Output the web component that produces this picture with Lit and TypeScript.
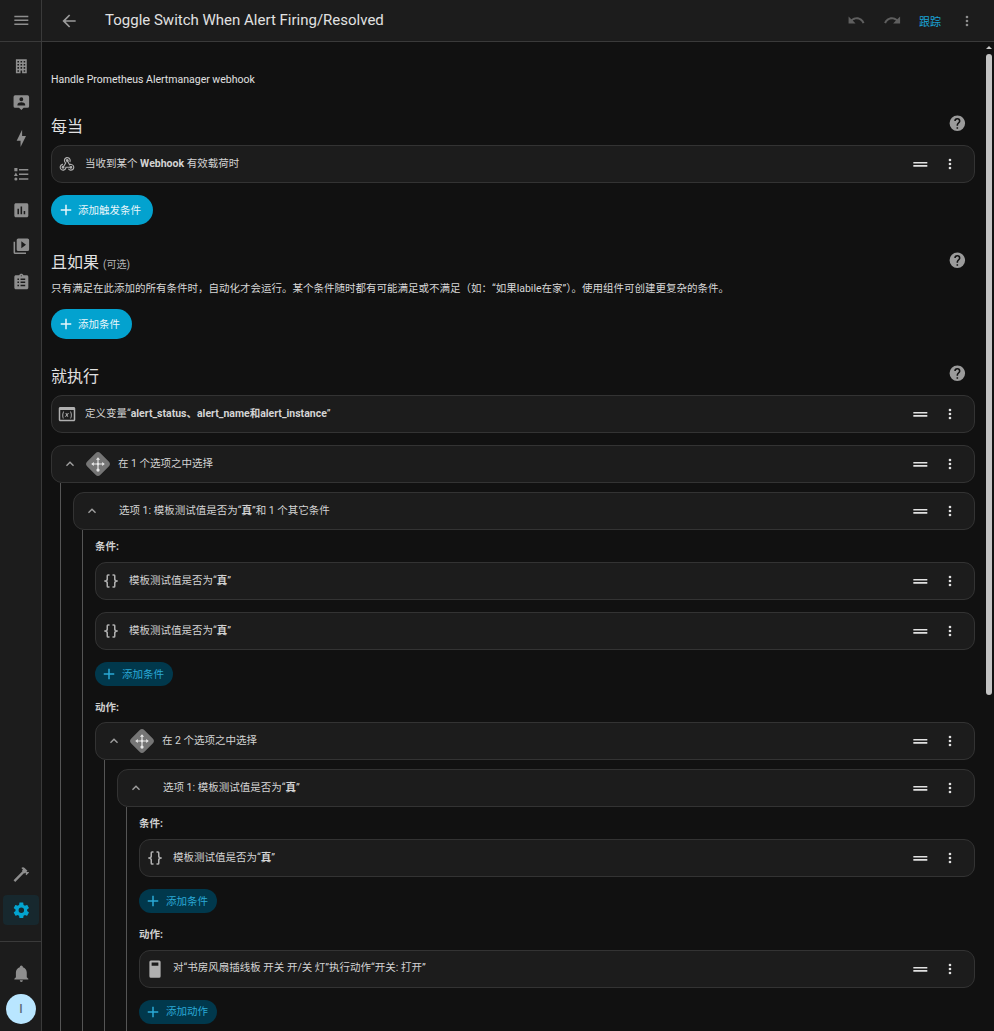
import { LitElement, html, css, svg } from "lit";
import { customElement } from "lit/decorators.js";

const P: Record<string, string> = {
  menu: "M3,6H21V8H3V6M3,11H21V13H3V11M3,16H21V18H3V16Z",
  back: "M20,11V13H8L13.5,18.5L12.08,19.92L4.16,12L12.08,4.08L13.5,5.5L8,11H20Z",
  office: "M5,3V21H11V17.5H13V21H19V3H5M7,5H9V7H7V5M11,5H13V7H11V5M15,5H17V7H15V5M7,9H9V11H7V9M11,9H13V11H11V9M15,9H17V11H15V9M7,13H9V15H7V13M11,13H13V15H11V13M15,13H17V15H15V13M7,17H9V19H7V17M15,17H17V19H15V17Z",
  comment: "M4 3H20A2 2 0 0 1 22 5V17A2 2 0 0 1 20 19H15L12 22L9 19H4A2 2 0 0 1 2 17V5A2 2 0 0 1 4 3ZM12 5.5A2.5 2.5 0 0 0 12 10.5A2.5 2.5 0 0 0 12 5.5ZM7 16H17V15C17 13 14 12 12 12S7 13 7 15Z",
  flash: "M11 15H6L13 1V9H18L11 23V15Z",
  list: "M5,9.5L7.5,14H2.5L5,9.5M3,4H7V8H3V4M5,20A2,2 0 0,0 7,18A2,2 0 0,0 5,16A2,2 0 0,0 3,18A2,2 0 0,0 5,20M9,5V7H21V5H9M9,19H21V17H9V19M9,13H21V11H9V13Z",
  chart: "M19 3H5C3.9 3 3 3.9 3 5V19C3 20.1 3.9 21 5 21H19C20.1 21 21 20.1 21 19V5C21 3.9 20.1 3 19 3M9 17H7V10H9V17M13 17H11V7H13V17M17 17H15V13H17V17Z",
  play: "M4,6H2V20A2,2 0 0,0 4,22H18V20H4V6M20,2H8A2,2 0 0,0 6,4V16A2,2 0 0,0 8,18H20A2,2 0 0,0 22,16V4A2,2 0 0,0 20,2M12,14.5V5.5L18,10L12,14.5Z",
  clip: "M19 3H14.82C14.4 1.84 13.3 1 12 1S9.6 1.84 9.18 3H5C3.9 3 3 3.9 3 5V19C3 20.1 3.9 21 5 21H19C20.1 21 21 20.1 21 19V5C21 3.9 20.1 3 19 3M7 7H9V9H7V7M7 11H9V13H7V11M7 15H9V17H7V15M17 17H11V15H17V17M17 13H11V11H17V13M17 9H11V7H17V9M12 2.75C12.41 2.75 12.75 3.09 12.75 3.5S12.41 4.25 12 4.25 11.25 3.91 11.25 3.5 11.59 2.75 12 2.75Z",
  hammer: "M2 19.63L13.43 8.2L12.72 7.5L14.14 6.07L12 3.89C13.2 2.7 15.09 2.7 16.27 3.89L19.87 7.5L18.45 8.91H21.29L22 9.62L18.45 13.21L17.74 12.5V9.62L16.27 11.04L15.56 10.33L4.13 21.76L2 19.63Z",
  cog: "M12,15.5A3.5,3.5 0 0,1 8.5,12A3.5,3.5 0 0,1 12,8.5A3.5,3.5 0 0,1 15.5,12A3.5,3.5 0 0,1 12,15.5M19.43,12.97C19.47,12.65 19.5,12.33 19.5,12C19.5,11.67 19.47,11.34 19.43,11L21.54,9.37C21.73,9.22 21.78,8.95 21.66,8.73L19.66,5.27C19.54,5.05 19.27,4.96 19.05,5.05L16.56,6.05C16.04,5.66 15.5,5.32 14.87,5.07L14.5,2.42C14.46,2.18 14.25,2 14,2H10C9.75,2 9.54,2.18 9.5,2.42L9.13,5.07C8.5,5.32 7.96,5.66 7.44,6.05L4.95,5.05C4.73,4.96 4.46,5.05 4.34,5.27L2.34,8.73C2.21,8.95 2.27,9.22 2.46,9.37L4.57,11C4.53,11.34 4.5,11.67 4.5,12C4.5,12.33 4.53,12.65 4.57,12.97L2.46,14.63C2.27,14.78 2.21,15.05 2.34,15.27L4.34,18.73C4.46,18.95 4.73,19.03 4.95,18.95L7.44,17.94C7.96,18.34 8.5,18.68 9.13,18.93L9.5,21.58C9.54,21.82 9.75,22 10,22H14C14.25,22 14.46,21.82 14.5,21.58L14.87,18.93C15.5,18.67 16.04,18.34 16.56,17.94L19.05,18.95C19.27,19.03 19.54,18.95 19.66,18.73L21.66,15.27C21.78,15.05 21.73,14.78 21.54,14.63L19.43,12.97Z",
  bell: "M21,19V20H3V19L5,17V11C5,7.9 7.03,5.17 10,4.29C10,4.19 10,4.1 10,4A2,2 0 0,1 12,2A2,2 0 0,1 14,4C14,4.1 14,4.19 14,4.29C16.97,5.17 19,7.9 19,11V17L21,19M14,21A2,2 0 0,1 12,23A2,2 0 0,1 10,21",
  undo: "M12.5,8C9.85,8 7.45,9 5.6,10.6L2,7V16H11L7.38,12.38C8.77,11.22 10.54,10.5 12.5,10.5C16.04,10.5 19.05,12.81 20.1,16L22.47,15.22C21.08,11.03 17.15,8 12.5,8Z",
  redo: "M18.4,10.6C16.55,9 14.15,8 11.5,8C6.85,8 2.92,11.03 1.54,15.22L3.9,16C4.95,12.81 7.95,10.5 11.5,10.5C13.45,10.5 15.23,11.22 16.62,12.38L13,16H22V7L18.4,10.6Z",
  dots: "M12,16A2,2 0 0,1 14,18A2,2 0 0,1 12,20A2,2 0 0,1 10,18A2,2 0 0,1 12,16M12,10A2,2 0 0,1 14,12A2,2 0 0,1 12,14A2,2 0 0,1 10,12A2,2 0 0,1 12,10M12,4A2,2 0 0,1 14,6A2,2 0 0,1 12,8A2,2 0 0,1 10,6A2,2 0 0,1 12,4Z",
  drag: "M21 11H3V9H21V11M21 13H3V15H21V13Z",
  help: "M15.07,11.25L14.17,12.17C13.45,12.89 13,13.5 13,15H11V14.5C11,13.39 11.45,12.39 12.17,11.67L13.41,10.41C13.78,10.05 14,9.55 14,9C14,7.89 13.1,7 12,7A2,2 0 0,0 10,9H8A4,4 0 0,1 12,5A4,4 0 0,1 16,9C16,9.88 15.64,10.67 15.07,11.25M13,19H11V17H13M12,2A10,10 0 0,0 2,12A10,10 0 0,0 12,22A10,10 0 0,0 22,12C22,6.47 17.5,2 12,2Z",
  chevron: "M7.41,15.41L12,10.83L16.59,15.41L18,14L12,8L6,14L7.41,15.41Z",
  plus: "M19,13H13V19H11V13H5V11H11V5H13V11H19V13Z",
  braces: "M8,3A2,2 0 0,0 6,5V9A2,2 0 0,1 4,11H3V13H4A2,2 0 0,1 6,15V19A2,2 0 0,0 8,21H10V19H8V14A2,2 0 0,0 6,12A2,2 0 0,0 8,10V5H10V3M16,3A2,2 0 0,1 18,5V9A2,2 0 0,0 20,11H21V13H20A2,2 0 0,0 18,15V19A2,2 0 0,1 16,21H14V19H16V14A2,2 0 0,1 18,12A2,2 0 0,1 16,10V5H14V3H16Z",
  webhook: "M10.46,19C9,21.07 6.15,21.59 4.09,20.15C2.04,18.71 1.56,15.84 3,13.75C3.87,12.5 5.21,11.83 6.58,11.77L6.63,13.2C5.72,13.27 4.84,13.74 4.27,14.56C3.27,16 3.58,17.94 4.95,18.91C6.33,19.87 8.26,19.5 9.26,18.07C9.57,17.62 9.75,17.13 9.82,16.63V15.62L15.4,15.58L15.47,15.47C16,14.55 17.15,14.23 18.05,14.75C18.95,15.27 19.26,16.43 18.73,17.33C18.2,18.24 17.04,18.56 16.14,18.04C15.73,17.8 15.44,17.42 15.31,17H11.24C11.13,17.73 10.87,18.43 10.46,19M17.74,11.86C20.27,12.17 22.07,14.44 21.76,16.93C21.45,19.43 19.15,21.2 16.62,20.89C15.13,20.71 13.9,19.86 13.19,18.68L14.43,17.96C14.92,18.73 15.75,19.28 16.75,19.41C18.5,19.62 20.05,18.43 20.26,16.76C20.47,15.09 19.23,13.56 17.5,13.35C16.96,13.29 16.44,13.36 15.97,13.53L15.12,13.97L12.54,9.2H12.32C11.26,9.16 10.44,8.29 10.47,7.25C10.5,6.21 11.4,5.4 12.45,5.44C13.5,5.5 14.33,6.35 14.3,7.39C14.28,7.83 14.11,8.23 13.84,8.54L15.74,12.05C16.36,11.85 17.04,11.78 17.74,11.86M8.25,9.14C7.25,6.79 8.31,4.1 10.62,3.12C12.94,2.14 15.62,3.25 16.62,5.6C17.21,6.97 17.09,8.47 16.42,9.67L15.18,8.95C15.6,8.14 15.67,7.15 15.27,6.22C14.59,4.62 12.78,3.85 11.23,4.5C9.67,5.16 8.97,7 9.65,8.6C9.93,9.26 10.4,9.77 10.97,10.11L11.36,10.32L8.29,15.31C8.32,15.36 8.36,15.42 8.39,15.5C8.88,16.41 8.54,17.56 7.62,18.05C6.71,18.54 5.56,18.18 5.06,17.24C4.57,16.31 4.91,15.16 5.83,14.67C6.22,14.46 6.65,14.41 7.06,14.5L9.37,10.73C8.9,10.3 8.5,9.76 8.25,9.14Z",
  variable: "M21 2.5H3C1.9 2.5 1 3.4 1 4.5V19.5C1 20.6 1.9 21.5 3 21.5H21C22.1 21.5 23 20.6 23 19.5V4.5C23 3.4 22.1 2.5 21 2.5M21 19.5H3V6.5H21V19.5M8.2 8.5C6.8 10.5 6.6 15 7.6 18H6.5C5.2 15 5.5 10.5 7 8.5H8.2M16 8.5H17.2C18.7 10.5 19 15 17.4 18H16.3C17.6 15 17.4 10.5 16 8.5M9.8 10.6H11.1L12 12.2L13.2 10.6H14.6L12.6 13.2L13.8 15.8H12.5L11.7 14.2L10.4 15.8H9L11.1 13.2L9.8 10.6Z",
  sw: "M6.5 0.5H17.5A2 2 0 0 1 19.5 2.5V21.5A2 2 0 0 1 17.5 23.5H6.5A2 2 0 0 1 4.5 21.5V2.5A2 2 0 0 1 6.5 0.5M7.5 3.2V7.6H16.5V3.2H7.5Z",
};

const icon = (n: string, cls = "") =>
  html`<svg class="ic ${cls}" viewBox="0 0 24 24">${svg`<path d=${P[n]}></path>`}</svg>`;

const arrows = svg`<g fill="#e8e8e8">
  <circle cx="12" cy="12" r="1.2"></circle>
  <path d="M12 6.2L10.2 8.4H11.5V11H12.5V8.4H13.8Z"></path>
  <path d="M6.2 12L8.4 10.2V11.5H11V12.5H8.4V13.8Z"></path>
  <path d="M17.8 12L15.6 10.2V11.5H13V12.5H15.6V13.8Z"></path>
  <circle cx="12" cy="17.2" r="1.4"></circle>
  <path d="M11.5 12H12.5V17H11.5Z"></path></g>`;

const chooseIcon = html`<svg class="choose" viewBox="0 0 24 24">
  <rect x="4" y="4" width="16" height="16" rx="3" fill="#757575" transform="rotate(45 12 12)"></rect>${arrows}</svg>`;

type Row = { text: unknown; lead?: string; choose?: boolean; chevron?: boolean; spacer?: boolean };

const row = (r: Row) => html`<div class="card ${r.lead ? "has-lead" : ""}">
  ${r.chevron ? html`<span class="chev">${icon("chevron")}</span>` : ""}
  ${r.choose ? chooseIcon : ""}
  ${r.lead ? html`<span class="lead">${icon(r.lead)}</span>` : ""}
  ${r.spacer ? html`<span class="gap"></span>` : ""}
  <span class="label">${r.text}</span>
  <span class="drag">${icon("drag")}</span>
  <span class="more">${icon("dots")}</span>
</div>`;

const cta = (t: string) => html`<button class="cta">${icon("plus")}<span>${t}</span></button>`;
const soft = (t: string) => html`<button class="soft">${icon("plus")}<span>${t}</span></button>`;
const head = (t: unknown) => html`<div class="head"><h2>${t}</h2><span class="help">${icon("help")}</span></div>`;
const tpl = () => row({ lead: "braces", text: html`模板测试值是否为“<b>真</b>”` });

@customElement("app-root")
export class AppRoot extends LitElement {
  static styles = css`
    :host { display: block; width: 994px; height: 1031px; overflow: hidden; background: #111111; color: #e1e1e1;
      font-family: Roboto, "Noto Sans CJK SC", sans-serif; font-size: 10.5px; }
    .app { display: flex; height: 1031px; }
    .ic { display: block; width: 100%; height: 100%; fill: currentColor; }
    .side { width: 41px; box-sizing: content-box; flex: none; background: #1c1c1c; border-right: 1px solid #3a3a3a; display: flex; flex-direction: column; color: #8e8e8e; }
    .side-top { height: 41px; flex: none; display: flex; align-items: center; justify-content: center; padding-left: 1px; border-bottom: 1px solid #3a3a3a; }
    .side-top span { width: 18.67px; height: 18.67px; }
    .nav { display: flex; flex-direction: column; align-items: center; gap: 17.33px; padding: 15px 0 0 1px; flex: 1; }
    .nav span { width: 18.67px; height: 18.67px; display: block; }
    .tools { display: flex; flex-direction: column; align-items: center; gap: 9px; padding: 0 0 16px 1px; }
    .tools .h { width: 18.67px; height: 18.67px; margin-bottom: 2px; }
    .active { width: 36px; height: 30px; border-radius: 4px; background: #17282e; color: #03a4d0; display: flex; align-items: center; justify-content: center; }
    .active span { width: 18.67px; height: 18.67px; }
    .bottom { border-top: 1px solid #3a3a3a; height: 90px; flex: none; display: flex; flex-direction: column; align-items: center; padding: 22px 0 0 1px; box-sizing: border-box; }
    .bottom .b { width: 18.67px; height: 18.67px; }
    .avatar { margin-top: 11px; width: 30px; height: 30px; border-radius: 50%; background: #b9e6ff; color: #5a6b75; font-size: 12px; font-weight: 500; display: flex; align-items: center; justify-content: center; }
    .main { flex: 1; min-width: 0; display: flex; flex-direction: column; position: relative; }
    .top { height: 41px; flex: none; background: #1c1c1c; border-bottom: 1px solid #3a3a3a; display: flex; align-items: center; padding: 0 19px 0 17px; }
    .top .back { width: 20px; height: 20px; color: #9b9b9b; margin-right: 26px; }
    .top h1 { font-size: 15px; font-weight: 400; margin: 0 0 2px; flex: 1; color: #e1e1e1; }
    .top .act { width: 18.67px; height: 18.67px; color: #5f5f5f; margin-right: 17.33px; }
    .follow { color: #1aa3d6; font-size: 11px; margin-right: 18px; }
    .top .d { width: 16px; height: 16px; color: #8e8e8e; }
    .body { flex: 1; min-height: 0; overflow: hidden; padding: 31px 19px 0 9px; }
    .desc { height: 13px; line-height: 13px; margin-bottom: 29px; }
    .head { display: flex; justify-content: space-between; height: 24px; align-items: center; }
    h2 { font-size: 16px; font-weight: 400; margin: 0; line-height: 24px; color: #e1e1e1; }
    h2 small { font-size: 10px; color: #b5b5b5; }
    .help { width: 18.67px; height: 18.67px; color: #9b9b9b; margin: -8px 8px 0 0; }
    .card { height: 38px; box-sizing: border-box; border: 1px solid #333333; border-radius: 11px; background: #1c1c1c; display: flex; align-items: center; padding: 0 16px 0 7px; }
    .card.has-lead { padding-left: 6px; }
    .lead { width: 18px; height: 18px; color: #b0b0b0; margin-right: 9px; flex: none; }
    .chev { width: 16px; height: 16px; color: #a0a0a0; margin: 0 4px 0 3px; flex: none; }
    .choose { width: 28px; height: 28px; margin: 0 6px 0 2px; flex: none; display: block; }
    .gap { width: 15px; flex: none; }
    .label { flex: 1; color: #d4d4d4; white-space: nowrap; position: relative; top: -2px; }
    .label b { font-weight: 700; }
    .drag { width: 18.67px; height: 18.67px; color: #e1e1e1; margin-right: 12.33px; }
    .more { width: 16px; height: 16px; color: #e1e1e1; }
    .cta, .soft { border: 0; display: flex; align-items: center; font-family: inherit; padding: 0; }
    .cta { height: 30px; border-radius: 15px; background: #03a2cf; color: #e8f6fb; font-size: 10.5px; padding: 0 12px 0 6px; margin-top: 12px; }
    .cta svg { width: 18px; height: 18px; margin-right: 3px; }
    .cta span { position: relative; top: -1px; }
    .soft { height: 24px; border-radius: 12px; background: #01384c; color: #2aa9d6; font-size: 10.5px; padding: 0 9px 0 5px; margin-top: 12px; }
    .soft svg { width: 18px; height: 18px; margin-right: 4px; }
    .soft span { position: relative; top: -1px; }
    .hint { font-size: 10.5px; line-height: 14px; margin-top: 6px; padding-bottom: 1px; color: #d8d8d8; white-space: nowrap; }
    .s2 { margin-top: 27px; }
    .s3 { margin-top: 26px; }
    .stack { display: flex; flex-direction: column; }
    .mt12 { margin-top: 12px; }
    .spc { height: 6px; }
    .nest { margin-left: 9px; border-left: 1px solid #555555; padding: 9px 0 0 12px; }
    .opt { margin-left: 9px; border-left: 1px solid #555555; padding: 0 0 0 12px; }
    .sub { font-size: 10.5px; font-weight: 700; color: #cfcfcf; height: 14px; line-height: 14px; margin: 10px 0 8px; }
    .sub.a { margin: 15px 0 7.3px; }
    .sub.a.deep { margin-bottom: 7.7px; }
    .r12 { margin-top: 12px; }
    .soft-w { align-self: flex-start; }
    .tail { height: 40px; }
    .scroll { position: absolute; right: 2px; top: 42px; width: 6px; bottom: 0; }
    .arrow { width: 0; height: 0; border-left: 3px solid transparent; border-right: 3px solid transparent; border-bottom: 3px solid #c8c8c8; margin-top: 4px; }
    .thumb { position: absolute; left: 0; right: 0; top: 12px; height: 641px; background: #c4c4c4; border-radius: 3px; }
  `;

  render() {
    return html`<div class="app">
      <aside class="side">
        <div class="side-top"><span>${icon("menu")}</span></div>
        <div class="nav">
          ${["office", "comment", "flash", "list", "chart", "play", "clip"].map((n) => html`<span>${icon(n)}</span>`)}
        </div>
        <div class="tools">
          <span class="h">${icon("hammer")}</span>
          <div class="active"><span>${icon("cog")}</span></div>
        </div>
        <div class="bottom">
          <span class="b">${icon("bell")}</span>
          <div class="avatar">I</div>
        </div>
      </aside>
      <div class="main">
        <header class="top">
          <span class="back">${icon("back")}</span>
          <h1>Toggle Switch When Alert Firing/Resolved</h1>
          <span class="act">${icon("undo")}</span>
          <span class="act">${icon("redo")}</span>
          <span class="follow">跟踪</span>
          <span class="d">${icon("dots")}</span>
        </header>
        <div class="body">
          <div class="desc">Handle Prometheus Alertmanager webhook</div>
          <section>
            ${head("每当")}
            <div class="spc"></div>
            ${row({ lead: "webhook", text: html`当收到某个 <b>Webhook</b> 有效载荷时` })}
            ${cta("添加触发条件")}
          </section>
          <section class="s2">
            ${head(html`且如果 <small>(可选)</small>`)}
            <div class="hint">只有满足在此添加的所有条件时，自动化才会运行。某个条件随时都有可能满足或不满足（如：“如果labile在家”）。使用组件可创建更复杂的条件。</div>
            ${cta("添加条件")}
          </section>
          <section class="s3 stack">
            ${head("就执行")}
            <div class="spc"></div>
            ${row({ lead: "variable", text: html`定义变量“<b>alert_status、alert_name和alert_instance</b>”` })}
            <div class="mt12">${row({ chevron: true, choose: true, text: "在 1 个选项之中选择" })}</div>
            <div class="nest stack">
              ${row({ chevron: true, spacer: true, text: html`选项 1: 模板测试值是否为“<b>真</b>”和 1 个其它条件` })}
              <div class="opt stack">
                <div class="sub">条件:</div>
                ${tpl()}
                <div class="r12">${tpl()}</div>
                <div class="soft-w">${soft("添加条件")}</div>
                <div class="sub a">动作:</div>
                ${row({ chevron: true, choose: true, text: "在 2 个选项之中选择" })}
                <div class="nest stack">
                  ${row({ chevron: true, spacer: true, text: html`选项 1: 模板测试值是否为“<b>真</b>”` })}
                  <div class="opt stack">
                    <div class="sub">条件:</div>
                    ${tpl()}
                    <div class="soft-w">${soft("添加条件")}</div>
                    <div class="sub a deep">动作:</div>
                    ${row({ lead: "sw", text: "对“书房风扇插线板 开关 开/关 灯”执行动作“开关: 打开”" })}
                    <div class="soft-w">${soft("添加动作")}</div>
                    <div class="tail"></div>
                  </div>
                </div>
              </div>
            </div>
          </section>
        </div>
        <div class="scroll"><div class="arrow"></div><div class="thumb"></div></div>
      </div>
    </div>`;
  }
}
